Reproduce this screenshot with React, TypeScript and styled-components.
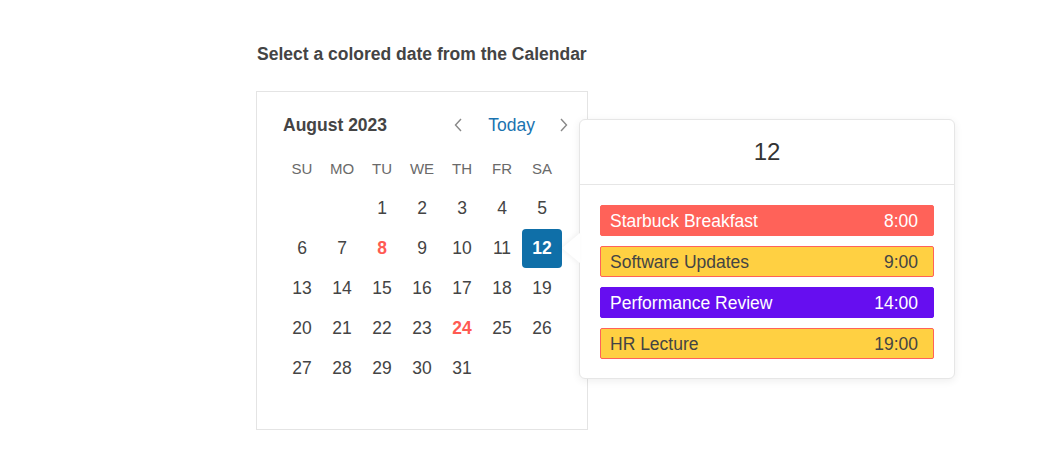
import React from "react";
import styled, { createGlobalStyle } from "styled-components";

const Global = createGlobalStyle`
  html, body { margin: 0; padding: 0; background: #fff; }
  body { font-family: "Liberation Sans", Arial, sans-serif; color: #444; }
`;

const Page = styled.div`
  width: 1045px;
  height: 470px;
  padding: 44px 0 0 257px;
  box-sizing: border-box;
`;

const Title = styled.h1`
  margin: 0;
  font-size: 17.5px;
  line-height: 20px;
  font-weight: bold;
  color: #444;
`;

const Stage = styled.div`
  position: relative;
  margin-top: 27px;
  margin-left: -1px;
`;

const CalendarBox = styled.div`
  width: 332px;
  height: 339px;
  box-sizing: border-box;
  border: 1px solid #e4e4e4;
  padding: 20px 24px 0 25px;
`;

const Header = styled.div`
  display: flex;
  align-items: center;
  justify-content: space-between;
  height: 26px;
  margin-right: -9px;
`;

const MonthLabel = styled.div`
  font-size: 17.5px;
  font-weight: bold;
  color: #444;
  padding-left: 1px;
`;

const Nav = styled.div`
  display: flex;
  align-items: center;
`;

const ChevronButton = styled.button`
  border: 0;
  background: none;
  padding: 0;
  width: 16px;
  height: 26px;
  display: flex;
  align-items: center;
  justify-content: center;
  cursor: pointer;
`;

const TodayButton = styled.button`
  border: 0;
  background: none;
  padding: 0;
  margin: 0 21px 0 22px;
  font-family: inherit;
  font-size: 17.5px;
  color: #1a73b0;
  cursor: pointer;
`;

const Grid = styled.div`
  display: grid;
  grid-template-columns: repeat(7, 40px);
  grid-auto-rows: 40px;
  margin-top: 10px;
`;

const WeekDay = styled.div`
  display: flex;
  align-items: center;
  justify-content: center;
  font-size: 15px;
  color: #6a6a6a;
`;

const Day = styled.div<{ $selected?: boolean; $marked?: boolean }>`
  display: flex;
  align-items: center;
  justify-content: center;
  font-size: 17.5px;
  margin: 1px 0 0 0;
  border-radius: 4px;
  color: ${(p) => (p.$selected ? "#fff" : p.$marked ? "#ff5a52" : "#444")};
  font-weight: ${(p) => (p.$selected || p.$marked ? "bold" : "normal")};
  background: ${(p) => (p.$selected ? "#0f6fa8" : "transparent")};
`;

const Popover = styled.div`
  position: absolute;
  left: 323px;
  top: 28px;
  width: 376px;
  box-sizing: border-box;
  background: #fff;
  border: 1px solid #e6e6e6;
  border-radius: 6px;
  box-shadow: 0 2px 8px rgba(0, 0, 0, 0.07);
`;

const Arrow = styled.div`
  position: absolute;
  left: -18px;
  top: 113px;
  width: 0;
  height: 0;
  border-top: 15px solid transparent;
  border-bottom: 15px solid transparent;
  border-right: 18px solid #fff;
  filter: drop-shadow(-2px 0 2px rgba(0, 0, 0, 0.05));
`;

const PopHeader = styled.div`
  height: 64px;
  display: flex;
  align-items: center;
  justify-content: center;
  font-size: 24px;
  color: #333;
  border-bottom: 1px solid #e6e6e6;
`;

const EventList = styled.div`
  display: flex;
  flex-direction: column;
  gap: 10px;
  padding: 20px 20px 19px;
`;

const Event = styled.div<{ $bg: string; $fg: string; $border: string }>`
  height: 31px;
  box-sizing: border-box;
  display: flex;
  align-items: center;
  justify-content: space-between;
  padding: 1px 15px 0 9px;
  border: 1px solid ${(p) => p.$border};
  border-radius: 2px;
  background: ${(p) => p.$bg};
  color: ${(p) => p.$fg};
  font-size: 17.5px;
`;

const Chevron = ({ dir }: { dir: "left" | "right" }) => (
  <svg width="8" height="14" viewBox="0 0 8 14">
    <polyline
      points={dir === "left" ? "7,1 1.5,7 7,13" : "1,1 6.5,7 1,13"}
      fill="none"
      stroke="#888"
      strokeWidth="1.4"
    />
  </svg>
);

const weekDays = ["SU", "MO", "TU", "WE", "TH", "FR", "SA"];
const marked = [8, 24];

const events = [
  { name: "Starbuck Breakfast", time: "8:00", bg: "#ff6259", fg: "#fff", border: "#ff6259" },
  { name: "Software Updates", time: "9:00", bg: "#ffd042", fg: "#444", border: "#ff6259" },
  { name: "Performance Review", time: "14:00", bg: "#660ef0", fg: "#fff", border: "#660ef0" },
  { name: "HR Lecture", time: "19:00", bg: "#ffd042", fg: "#444", border: "#ff6259" },
];

export default function App() {
  const cells: (number | null)[] = [null, null];
  for (let d = 1; d <= 31; d++) cells.push(d);

  return (
    <>
      <Global />
      <Page>
        <Title>Select a colored date from the Calendar</Title>
        <Stage>
          <CalendarBox>
            <Header>
              <MonthLabel>August 2023</MonthLabel>
              <Nav>
                <ChevronButton aria-label="Previous month">
                  <Chevron dir="left" />
                </ChevronButton>
                <TodayButton>Today</TodayButton>
                <ChevronButton aria-label="Next month">
                  <Chevron dir="right" />
                </ChevronButton>
              </Nav>
            </Header>
            <Grid>
              {weekDays.map((w) => (
                <WeekDay key={w}>{w}</WeekDay>
              ))}
              {cells.map((d, i) => (
                <Day key={i} $selected={d === 12} $marked={d !== null && marked.includes(d)}>
                  {d ?? ""}
                </Day>
              ))}
            </Grid>
          </CalendarBox>
          <Popover>
            <Arrow />
            <PopHeader>12</PopHeader>
            <EventList>
              {events.map((e) => (
                <Event key={e.name} $bg={e.bg} $fg={e.fg} $border={e.border}>
                  <span>{e.name}</span>
                  <span>{e.time}</span>
                </Event>
              ))}
            </EventList>
          </Popover>
        </Stage>
      </Page>
    </>
  );
}
